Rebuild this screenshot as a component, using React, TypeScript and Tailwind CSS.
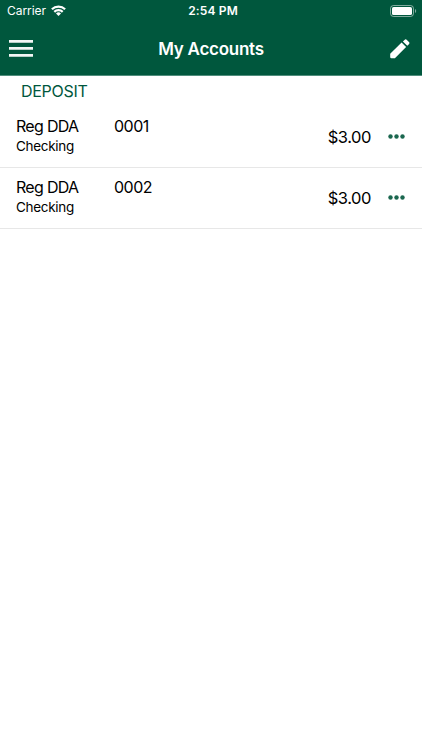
const accounts = [
  { name: 'Reg DDA', number: '0001', type: 'Checking', balance: '$3.00' },
  { name: 'Reg DDA', number: '0002', type: 'Checking', balance: '$3.00' },
];

function StatusBar() {
  return (
    <div className="grid h-[22px] grid-cols-3 items-center pl-[7px] pr-[5px] text-[12px] leading-[22px]">
      <div className="flex items-center gap-[5px]">
        <span className="w-[39px] tracking-[-0.05px]">Carrier</span>
        <svg className="-mt-px" width="15" height="11" viewBox="0 0 15 11" fill="none" stroke="white" strokeWidth="2.2">
          <path d="M0.9 4.3a9.3 9.3 0 0 1 13.2 0" />
          <path d="M3.3 6.9a6 6 0 0 1 8.4 0" />
          <path d="M5 8.5a3.5 3.5 0 0 1 5 0L7.5 11z" fill="white" stroke="none" />
        </svg>
      </div>
      <span className="pl-[2px] text-center font-semibold tracking-[0.15px]">2:54 PM</span>
      <svg className="-mt-px justify-self-end" width="27" height="12" viewBox="0 0 27 12">
        <rect x="0.5" y="0.5" width="23" height="11" rx="3" fill="none" stroke="white" strokeOpacity="0.5" />
        <rect x="2" y="2" width="20" height="8" rx="1.6" fill="white" />
        <path d="M25 4c1.6.6 1.6 3.4 0 4z" fill="white" fillOpacity="0.5" />
      </svg>
    </div>
  );
}

export default function App() {
  return (
    <div className="h-[750px] w-[422px] bg-white font-['Inter',sans-serif] text-black">
      <header className="h-[76px] border-b border-[#4f8d7c] bg-[#00573d] text-white">
        <StatusBar />
        <div className="grid h-[53px] grid-cols-[1fr_auto_1fr] items-center px-[9px]">
          <svg className="-mt-px" width="24" height="17" viewBox="0 0 24 17" fill="#f2f7f5">
            <path d="M0 0h24v2.7H0zM0 7h24v2.7H0zM0 14h24v2.7H0z" />
          </svg>
          <h1 className="pt-[2px] text-[17px] font-semibold tracking-[-0.25px]">My Accounts</h1>
          <svg className="mr-[3px] justify-self-end" width="20" height="20" viewBox="0 0 20 20" fill="white">
            <path d="M0.2 18V14.8L11.6 3.6l4.5 4.5L4.9 19.2H1.4a1.2 1.2 0 0 1-1.2-1.2zM12.9 2.4l1.6-1.5a1.7 1.7 0 0 1 2.4 0l2 2a1.7 1.7 0 0 1 0 2.4l-1.6 1.5z" />
          </svg>
        </div>
      </header>
      <h2 className="h-[31px] pl-[21px] text-[16px] leading-[31px] tracking-[-0.3px] text-[#00573d]">DEPOSIT</h2>
      {accounts.map((a) => (
        <div key={a.number} className="flex h-[61px] items-center border-b border-[#e7e7e7] pl-4 pr-[17px]">
          <div className="w-[98px] self-start pt-[9px]">
            <div className="text-[16px] leading-5 tracking-[-0.7px]">{a.name}</div>
            <div className="text-[13.5px] leading-5 tracking-[-0.3px]">{a.type}</div>
          </div>
          <div className="self-start pt-[9px] text-[16px] leading-5 tracking-[-0.5px]">{a.number}</div>
          <div className="ml-auto text-[16.5px] tracking-[-0.45px]">{a.balance}</div>
          <svg className="-mt-px ml-[17px]" width="17" height="5" viewBox="0 0 17 5" fill="#1b674f">
            <circle cx="2.5" cy="2.5" r="2.2" />
            <circle cx="8.5" cy="2.5" r="2.2" />
            <circle cx="14.5" cy="2.5" r="2.2" />
          </svg>
        </div>
      ))}
    </div>
  );
}
